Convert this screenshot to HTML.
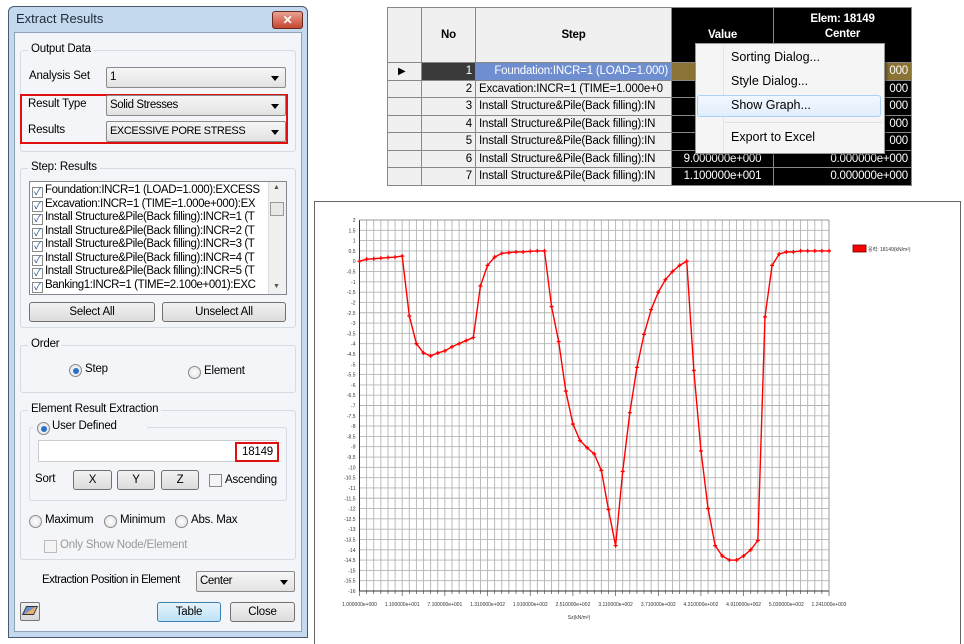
<!DOCTYPE html>
<html><head><meta charset="utf-8"><style>
*{box-sizing:border-box;margin:0;padding:0}
body{width:964px;height:644px;background:#fff;position:relative;overflow:hidden;font-family:"Liberation Sans","Noto Sans CJK KR",sans-serif;font-size:11.5px;color:#000;letter-spacing:-0.2px}
.a{position:absolute}
.win{left:8px;top:6px;width:300px;height:632px;background:#c4d8ee;border:1px solid #4a5a6e;border-radius:6px 6px 0 0}
.body{left:14px;top:32px;width:288px;height:600px;background:#f3f5f8;border:1px solid #8fa3ba}
.grp{position:absolute;border:1px solid #d5dbe3;border-radius:3px}
.gl{position:absolute;background:#f3f5f8;padding:0 3px}
.cb{position:absolute;height:21px;border:1px solid #8a8a8a;border-radius:2px;background:linear-gradient(#f6f6f6,#e2e2e2);padding:3px 3px;white-space:nowrap;overflow:hidden;letter-spacing:-0.4px}
.cb:after{content:"";position:absolute;right:6px;top:8px;border:4px solid transparent;border-top:5px solid #000}
.btn{position:absolute;height:20px;border:1px solid #707070;border-radius:3px;background:linear-gradient(#f2f2f2,#dcdcdc);text-align:center;line-height:18px}
.rad{position:absolute;width:13px;height:13px;border-radius:50%;border:1px solid #8a8a8a;background:radial-gradient(#fff,#ddd)}
.rad.on:after{content:"";position:absolute;left:2.5px;top:2.5px;width:6px;height:6px;border-radius:50%;background:#2a6fc9}
.chk{position:absolute;width:13px;height:13px;border:1px solid #8a8a8a;background:#f4f4f4}
.lst div{height:13.5px;line-height:13.5px;white-space:nowrap;font-size:11.5px;letter-spacing:-0.4px}
.lst span{display:inline-block;width:11px;height:11px;border:1px solid #8a8a8a;margin:0 2px 0 2px;vertical-align:-2px;background:#fff;color:#2050a0;font-size:10px;line-height:9px;text-align:center;letter-spacing:0}
table{border-collapse:collapse;font-size:11.5px;font-family:"Liberation Sans",sans-serif;letter-spacing:-0.2px}
td{border:1px solid #888;height:17.5px;padding:0 3px;white-space:nowrap;overflow:hidden}
</style></head><body>

<div class="a win"></div>
<div class="a" style="left:16px;top:11px;font-size:13px;color:#1e2a3a;letter-spacing:0">Extract Results</div>
<div class="a" style="left:272px;top:11px;width:31px;height:18px;border:1px solid #6b2a20;border-radius:3px;background:linear-gradient(#e8a294,#c8462e);color:#fff;text-align:center;font-weight:bold;font-size:12px;line-height:16px">✕</div>
<div class="a body"></div>

<div class="grp" style="left:20px;top:50px;width:276px;height:102px"></div>
<div class="gl" style="left:28px;top:43px">Output Data</div>
<div class="a" style="left:29px;top:70px">Analysis Set</div>
<div class="cb" style="left:106px;top:67px;width:180px">1</div>
<div class="a" style="left:20px;top:94px;width:268px;height:50px;border:2px solid #e01010"></div>
<div class="a" style="left:28px;top:98px">Result Type</div>
<div class="cb" style="left:106px;top:95px;width:180px">Solid Stresses</div>
<div class="a" style="left:28px;top:124px">Results</div>
<div class="cb" style="left:106px;top:121px;width:180px;font-size:11px">EXCESSIVE PORE STRESS</div>

<div class="grp" style="left:20px;top:168px;width:276px;height:160px"></div>
<div class="gl" style="left:28px;top:161px">Step: Results</div>
<div class="a lst" style="left:29px;top:181px;width:258px;height:114px;border:1px solid #828790;background:#fff;padding-top:2px;overflow:hidden">
<div><span>✓</span>Foundation:INCR=1 (LOAD=1.000):EXCESS</div>
<div><span>✓</span>Excavation:INCR=1 (TIME=1.000e+000):EX</div>
<div><span>✓</span>Install Structure&amp;Pile(Back filling):INCR=1 (T</div>
<div><span>✓</span>Install Structure&amp;Pile(Back filling):INCR=2 (T</div>
<div><span>✓</span>Install Structure&amp;Pile(Back filling):INCR=3 (T</div>
<div><span>✓</span>Install Structure&amp;Pile(Back filling):INCR=4 (T</div>
<div><span>✓</span>Install Structure&amp;Pile(Back filling):INCR=5 (T</div>
<div><span>✓</span>Banking1:INCR=1 (TIME=2.100e+001):EXC</div>
</div>
<div class="a" style="left:268px;top:182px;width:18px;height:112px;background:#f0f0f0;border-left:1px solid #ddd"></div>
<div class="a" style="left:270px;top:202px;width:14px;height:14px;border:1px solid #999;background:#e8e8e8"></div>
<div class="a" style="left:273px;top:184px;font-size:7px;color:#555">▲</div>
<div class="a" style="left:273px;top:283px;font-size:7px;color:#555">▼</div>
<div class="btn" style="left:29px;top:302px;width:126px">Select All</div>
<div class="btn" style="left:162px;top:302px;width:124px">Unselect All</div>

<div class="grp" style="left:20px;top:345px;width:276px;height:48px"></div>
<div class="gl" style="left:28px;top:338px">Order</div>
<div class="rad on" style="left:69px;top:364px"></div><div class="a" style="left:85px;top:363px">Step</div>
<div class="rad" style="left:188px;top:366px"></div><div class="a" style="left:204px;top:365px">Element</div>

<div class="grp" style="left:20px;top:410px;width:276px;height:150px"></div>
<div class="gl" style="left:28px;top:403px">Element Result Extraction</div>
<div class="grp" style="left:29px;top:427px;width:258px;height:74px"></div>
<div class="a" style="left:33px;top:421px;width:114px;height:14px;background:#f3f5f8"></div>
<div class="rad on" style="left:37px;top:422px"></div><div class="a" style="left:52px;top:420px">User Defined</div>
<div class="a" style="left:38px;top:440px;width:239px;height:22px;border:1px solid #ccc;background:#fff"></div>
<div class="a" style="left:235px;top:442px;width:44px;height:20px;border:2px solid #e01010;background:#fff;text-align:right;padding:2px 4px 0 0">18149</div>
<div class="a" style="left:35px;top:473px">Sort</div>
<div class="btn" style="left:73px;top:470px;width:39px">X</div>
<div class="btn" style="left:117px;top:470px;width:38px">Y</div>
<div class="btn" style="left:161px;top:470px;width:38px">Z</div>
<div class="chk" style="left:209px;top:474px"></div><div class="a" style="left:225px;top:474px">Ascending</div>
<div class="rad" style="left:29px;top:515px"></div><div class="a" style="left:45px;top:514px">Maximum</div>
<div class="rad" style="left:104px;top:515px"></div><div class="a" style="left:120px;top:514px">Minimum</div>
<div class="rad" style="left:175px;top:515px"></div><div class="a" style="left:191px;top:514px">Abs. Max</div>
<div class="chk" style="left:44px;top:540px;border-color:#bbb"></div><div class="a" style="left:60px;top:539px;color:#999">Only Show Node/Element</div>

<div class="a" style="left:42px;top:574px;letter-spacing:-0.5px">Extraction Position in Element</div>
<div class="cb" style="left:196px;top:571px;width:99px">Center</div>
<div class="a" style="left:20px;top:602px;width:20px;height:19px;border:1px solid #777;border-radius:2px;background:linear-gradient(#f0f0f0,#d8d8d8)"></div>
<div class="a" style="left:24px;top:606px;width:12px;height:9px;background:linear-gradient(135deg,#6b8fd0 50%,#e8b070 50%);transform:skewX(-25deg);border:1px solid #333"></div>
<div class="btn" style="left:157px;top:602px;width:64px;border-color:#3c7fb1;background:linear-gradient(#e5f4fc,#bfe2f7)">Table</div>
<div class="btn" style="left:230px;top:602px;width:65px">Close</div>

<!-- table -->
<table class="a" style="left:387px;top:7px;width:524px;table-layout:fixed">
<colgroup><col style="width:34px"><col style="width:54px"><col style="width:196px"><col style="width:102px"><col style="width:138px"></colgroup>
<tr style="height:55px;font-weight:bold"><td style="background:#f0f0f0"></td><td style="background:#f0f0f0;text-align:center">No</td><td style="background:#f0f0f0;text-align:center">Step</td><td style="background:#000;color:#fff;text-align:center">Value</td><td style="background:#000;color:#fff;text-align:center;line-height:15px;vertical-align:top;padding-top:4px">Elem: 18149<br>Center</td></tr>
<tr><td style="background:#f0f0f0;font-size:10px;padding-left:10px">▶</td><td style="background:#3a3a3a;color:#fff;text-align:right">1</td><td style="background:#6f8ed0;color:#fff;text-align:right">Foundation:INCR=1 (LOAD=1.000)</td><td style="background:#8b7336"></td><td style="background:#8b7336;color:#fff;text-align:right">000</td></tr>
<tr><td style="background:#f0f0f0"></td><td style="background:#f0f0f0;text-align:right">2</td><td style="background:#f0f0f0">Excavation:INCR=1 (TIME=1.000e+0</td><td style="background:#000"></td><td style="background:#000;color:#fff;text-align:right">000</td></tr>
<tr><td style="background:#f0f0f0"></td><td style="background:#f0f0f0;text-align:right">3</td><td style="background:#f0f0f0">Install Structure&amp;Pile(Back filling):IN</td><td style="background:#000"></td><td style="background:#000;color:#fff;text-align:right">000</td></tr>
<tr><td style="background:#f0f0f0"></td><td style="background:#f0f0f0;text-align:right">4</td><td style="background:#f0f0f0">Install Structure&amp;Pile(Back filling):IN</td><td style="background:#000"></td><td style="background:#000;color:#fff;text-align:right">000</td></tr>
<tr><td style="background:#f0f0f0"></td><td style="background:#f0f0f0;text-align:right">5</td><td style="background:#f0f0f0">Install Structure&amp;Pile(Back filling):IN</td><td style="background:#000"></td><td style="background:#000;color:#fff;text-align:right">000</td></tr>
<tr><td style="background:#f0f0f0"></td><td style="background:#f0f0f0;text-align:right">6</td><td style="background:#f0f0f0">Install Structure&amp;Pile(Back filling):IN</td><td style="background:#000;color:#fff;text-align:center">9.000000e+000</td><td style="background:#000;color:#fff;text-align:right">0.000000e+000</td></tr>
<tr><td style="background:#f0f0f0"></td><td style="background:#f0f0f0;text-align:right">7</td><td style="background:#f0f0f0">Install Structure&amp;Pile(Back filling):IN</td><td style="background:#000;color:#fff;text-align:center">1.100000e+001</td><td style="background:#000;color:#fff;text-align:right">0.000000e+000</td></tr>
</table>
<div class="a" style="left:695px;top:43px;width:190px;height:111px;background:#f5f5f5;border:1px solid #979797;box-shadow:2px 2px 3px rgba(0,0,0,.4)"></div>
<div class="a" style="left:723px;top:45px;width:1px;height:107px;background:#e2e3e3"></div>
<div class="a" style="left:697px;top:95px;width:184px;height:22px;border:1px solid #aecff7;border-radius:3px;background:linear-gradient(#f2f8fe,#e1eefc)"></div>
<div class="a" style="left:725px;top:122px;width:157px;height:1px;background:#e0e0e0"></div>
<div class="a" style="left:731px;top:50px;font-size:12.5px;letter-spacing:0">Sorting Dialog...</div>
<div class="a" style="left:731px;top:74px;font-size:12.5px;letter-spacing:0">Style Dialog...</div>
<div class="a" style="left:731px;top:98px;font-size:12.5px;letter-spacing:0">Show Graph...</div>
<div class="a" style="left:731px;top:130px;font-size:12.5px;letter-spacing:0">Export to Excel</div>

<!-- graph -->
<div class="a" style="left:314px;top:201px;width:647px;height:443px;border:1px solid #666;border-bottom:none;background:#fff"></div>
<svg id="g" class="a" style="left:0;top:0;letter-spacing:0" width="964" height="644"></svg>
<script>
var s="",L=359.5,R=829,T=220,B=591,n=66,dx=(R-L)/n,u=(B-T)/18;
function Y(v){return T+(2-v)*u}
for(var i=0;i<=36;i++){var y=T+i*u/2;s+='<line x1="'+L+'" x2="'+R+'" y1="'+y+'" y2="'+y+'" stroke="#b4b4b4" stroke-width="0.9"/>';
var v=2-i/2;s+='<text x="'+(L-4)+'" y="'+(y+2)+'" font-size="5" text-anchor="end" fill="#333">'+v+'</text>'}
for(var i=0;i<=n;i++){var x=L+i*dx;s+='<line x1="'+x+'" x2="'+x+'" y1="'+T+'" y2="'+B+'" stroke="#b4b4b4" stroke-width="0.9"/><line x1="'+x+'" x2="'+x+'" y1="'+B+'" y2="'+(B+(i%6?3:5))+'" stroke="#333" stroke-width="0.6"/>'}
var lb=["1.000000e+000","1.100000e+001","7.100000e+001","1.310000e+002","1.910000e+002","2.510000e+002","3.110000e+002","3.710000e+002","4.310000e+002","4.910000e+002","5.030000e+002","1.241000e+003"];
for(var k=0;k<12;k++)s+='<text x="'+(L+k*6*dx)+'" y="'+(B+15)+'" font-size="5" text-anchor="middle" fill="#333">'+lb[k]+'</text>';
s+='<text x="579" y="619" font-size="5" text-anchor="middle" fill="#333">Sz(kN/m²)</text>';
s+='<line x1="'+L+'" x2="'+L+'" y1="'+T+'" y2="'+B+'" stroke="#333"/><line x1="'+L+'" x2="'+R+'" y1="'+B+'" y2="'+B+'" stroke="#333"/><line x1="'+R+'" x2="'+R+'" y1="'+T+'" y2="'+B+'" stroke="#999"/><line x1="'+L+'" x2="'+R+'" y1="'+T+'" y2="'+T+'" stroke="#999"/>';
var d=[0,0.1,0.12,0.15,0.18,0.2,0.25,-2.65,-4,-4.45,-4.6,-4.45,-4.35,-4.15,-4,-3.85,-3.7,-1.2,-0.2,0.2,0.38,0.42,0.45,0.45,0.48,0.5,0.5,-2.2,-3.9,-6.3,-7.9,-8.7,-9.05,-9.35,-10.15,-12.05,-13.8,-10.2,-7.35,-5.15,-3.55,-2.35,-1.5,-0.9,-0.5,-0.2,0,-5.3,-9.2,-12,-13.8,-14.3,-14.5,-14.5,-14.3,-14,-13.55,-2.7,-0.2,0.35,0.45,0.45,0.5,0.5,0.5,0.5,0.5];
var p="",m="";for(var i=0;i<d.length;i++){var x=L+i*dx,y=Y(d[i]);p+=x+','+y+' ';m+='<path d="M'+(x-2)+' '+y+'h4M'+x+' '+(y-2)+'v4" stroke="#f00" stroke-width="1.3"/>'}
s+='<polyline points="'+p+'" fill="none" stroke="#f00" stroke-width="1.4"/>'+m;
s+='<rect x="853" y="245" width="13" height="7" fill="#f00" stroke="#600" stroke-width="0.8"/><text x="868" y="251" font-size="5" fill="#333">응력: 18149(kN/m²)</text>';
document.getElementById('g').innerHTML=s;
</script>
</body></html>
